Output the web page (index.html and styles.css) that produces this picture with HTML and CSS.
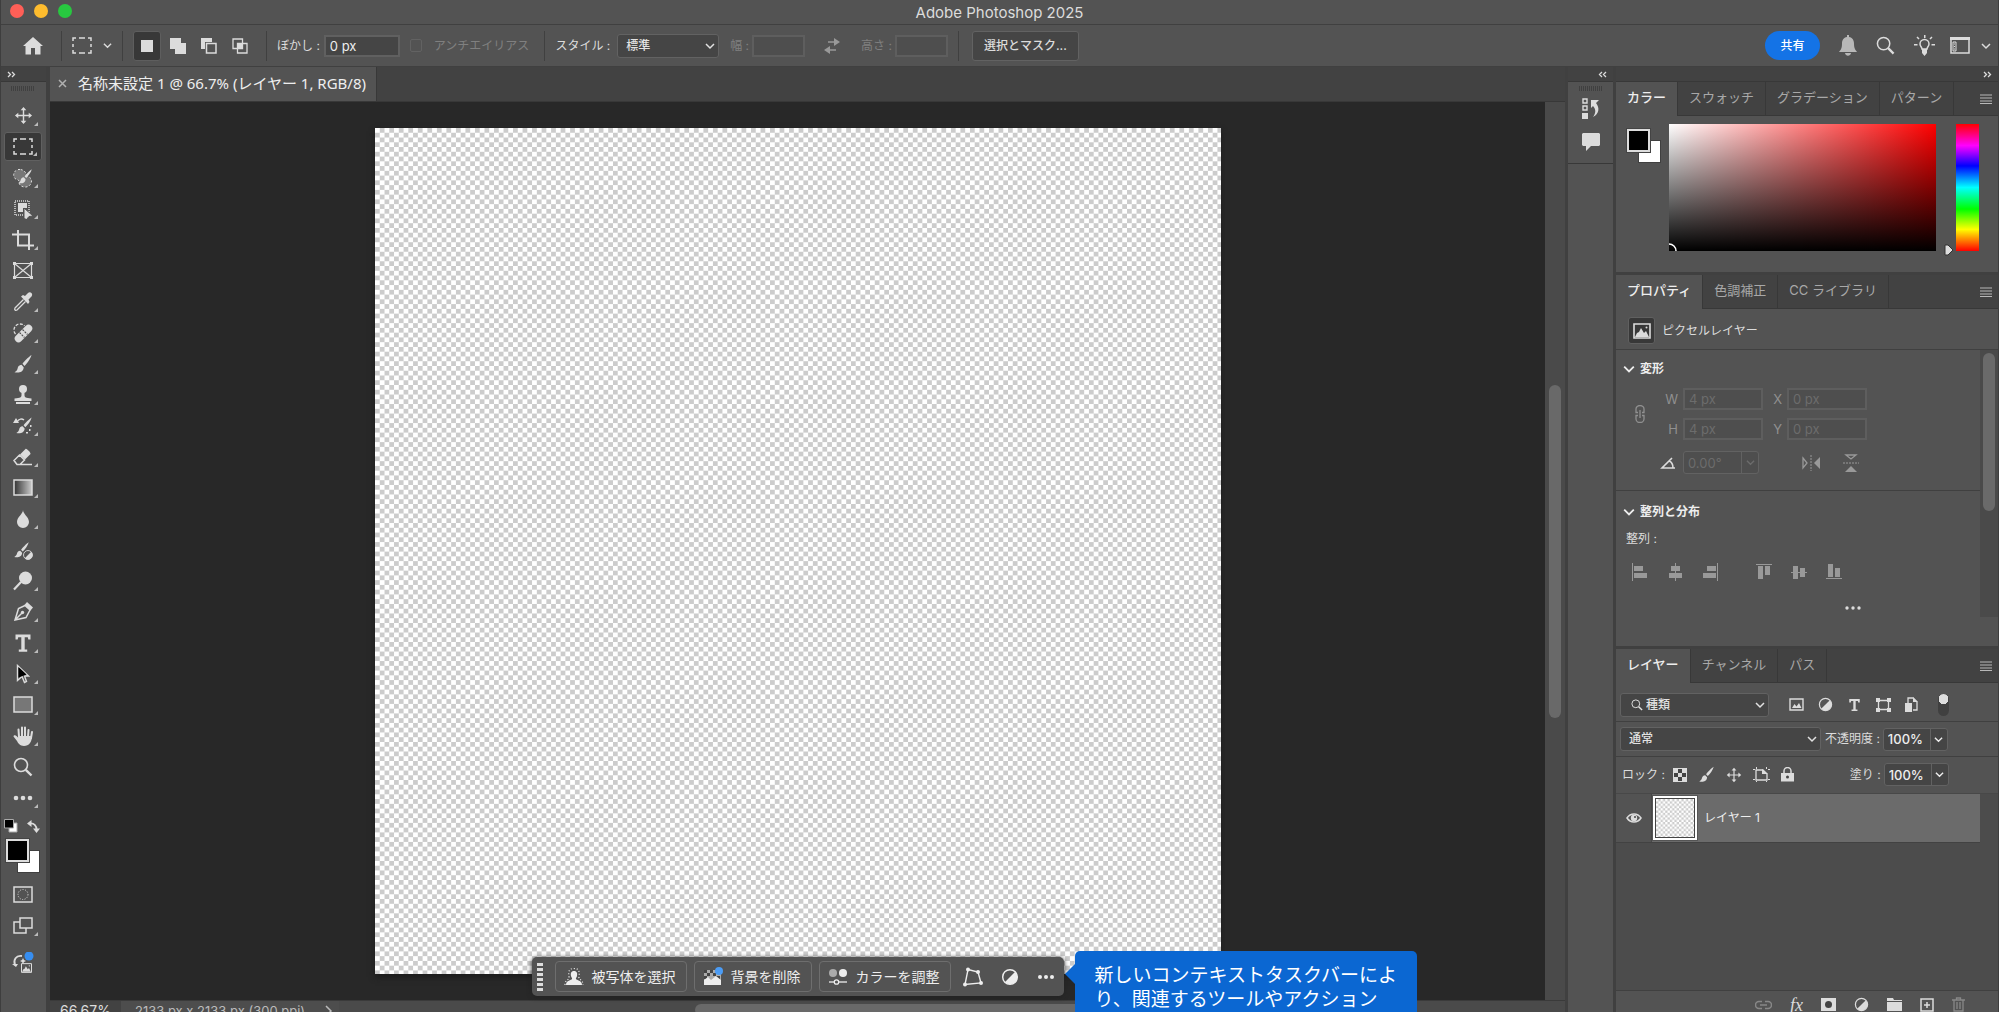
FILE: index.html
```html
<!DOCTYPE html>
<html lang="ja">
<head>
    <meta charset="UTF-8">
    <title>Adobe Photoshop 2025</title>
    <link rel="stylesheet" href="styles.css">
</head>
<body>
<!-- 共通アイコン -->
<svg class="defs" width="0" height="0">
    <symbol id="chevron" viewBox="0 0 10 10"><path d="M1 3l4 4 4-4" fill="none" stroke="currentColor" stroke-width="1.5"/></symbol>
    <symbol id="menu" viewBox="0 0 12 10"><path d="M0 1h12M0 4h12M0 7h12M0 9.500h12" stroke="currentColor" stroke-width="1.200"/></symbol>
    <symbol id="brush" viewBox="0 0 20 20"><path d="M18.500 1c-3 2-7.500 6.500-9 8.800l2 2.100C14 9.500 17.500 5 18.500 1zM8.500 10.800c-2.500.2-3.500 1.700-3.900 3.700-.4 1.700-1.400 2.800-3.100 3.700 3.500.9 8.900.6 9.200-4.900z"/></symbol>
    <symbol id="move" viewBox="0 0 20 20"><path d="M10 3v14M3 10h14" stroke="currentColor" stroke-width="1.500"/><path d="M10 1l3 3.500H7zM10 19l3-3.500H7zM1 10l3.500-3v6zM19 10l-3.500-3v6z"/></symbol>
    <symbol id="half" viewBox="0 0 16 16"><circle cx="8" cy="8" r="6.500" fill="none" stroke="currentColor" stroke-width="1.300"/><path d="M12.600 3.400a6.500 6.500 0 0 1-9.200 9.200z"/></symbol>
    <symbol id="search" viewBox="0 0 20 20"><circle cx="8" cy="8" r="6.500" fill="none" stroke="currentColor" stroke-width="1.600"/><path d="M12.800 12.800L18.500 18.500" stroke="currentColor" stroke-width="2.400"/></symbol>
    <symbol id="type" viewBox="0 0 20 20"><path d="M2.500 1.500h15v5h-2.200l-.5-2.300h-3.100v12.300h2.500v2.200H5.800v-2.200h2.500V4.200H5.200l-.5 2.300H2.500z"/></symbol>
    <symbol id="photo" viewBox="0 0 18 16"><path d="M1 1h16v14H1z" fill="none" stroke="currentColor" stroke-width="1.600"/><path d="M2 14l2-4 2-1 2-4 3 5 2-2 3 6z"/><circle cx="13.500" cy="4.500" r="1"/></symbol>
    <pattern id="tiles" width="8" height="8" patternUnits="userSpaceOnUse"><rect width="8" height="8" fill="#fff"/><path d="M4 0h4v4H4zM0 4h4v4H0z" fill="#ccc"/></pattern>
    <linearGradient id="fade"><stop offset="0" stop-color="#333"/><stop offset="1" stop-color="#ccc"/></linearGradient>
</svg>

<div class="app">
    <header class="titlebar">
        <span class="light red"></span>
        <span class="light yellow"></span>
        <span class="light green"></span>
        <h1>Adobe Photoshop 2025</h1>
    </header>

    <!-- オプションバー -->
    <div class="options">
        <button class="icon home" aria-label="ホーム"><svg width="20" height="18" viewBox="0 0 20 18"><path d="M10 0l10 9h-2.500v8.500H12V11H8v6.500H2.500V9H0z"/></svg></button>
        <span class="sep"></span>
        <button class="icon marquee" aria-label="長方形選択ツール">
            <svg width="20" height="17" viewBox="0 0 20 17"><path d="M1 4V1h3M7 1h6M16 1h3v3M19 7v3M19 13v3h-3M13 16H7M4 16H1v-3M1 10V7" fill="none" stroke="currentColor" stroke-width="1.500"/></svg>
            <svg width="9" height="9"><use href="#chevron"/></svg>
        </button>
        <span class="sep"></span>
        <div class="modes">
            <button class="mode active" aria-label="新規選択"><svg width="16" height="16"><path d="M2 2h12v12H2z"/></svg></button>
            <button class="mode" aria-label="選択範囲に追加"><svg width="18" height="18"><path d="M1 1h11v5h5v11H6v-5H1z"/></svg></button>
            <button class="mode" aria-label="選択範囲から一部削除"><svg width="18" height="18"><path d="M1 1h11v4H5v7H1z"/><path d="M6.500 6.500h9.500v9.500H6.500z" fill="none" stroke="currentColor" stroke-width="1.500"/></svg></button>
            <button class="mode" aria-label="選択範囲との共通範囲"><svg width="18" height="18"><path d="M2 2h9.500v9.500H2zM6.500 6.500h9.500v9.500H6.500z" fill="none" stroke="currentColor" stroke-width="1.300"/><path d="M6.500 6.500h5v5h-5z"/></svg></button>
        </div>
        <span class="sep"></span>
        <label for="feather">ぼかし :</label>
        <input class="field feather" id="feather" type="text" value="0 px">
        <input class="check" id="anti" type="checkbox" disabled>
        <label class="off anti" for="anti">アンチエイリアス</label>
        <span class="sep"></span>
        <label for="style">スタイル :</label>
        <span class="select style"><select id="style"><option>標準</option></select><svg width="10" height="10"><use href="#chevron"/></svg></span>
        <label class="off" for="width">幅 :</label>
        <input class="field size" id="width" type="text" disabled>
        <button class="icon swap" aria-label="高さと幅を入れ替え"><svg width="16" height="16" viewBox="0 0 16 16"><path d="M4 4h7M5 12h7" stroke="currentColor" stroke-width="1.500"/><path d="M10 0l6 4-6 4zM6 8l-6 4 6 4z"/></svg></button>
        <label class="off" for="height">高さ :</label>
        <input class="field size" id="height" type="text" disabled>
        <span class="sep"></span>
        <button class="mask">選択とマスク...</button>
        <div class="right">
            <button class="share">共有</button>
            <button class="icon bell" aria-label="通知"><svg width="18" height="21" viewBox="0 0 18 21"><path d="M8 0h2v2c3.500.6 5 3.300 5 6.500 0 4.500 1 6 3 8.500H0c2-2.500 3-4 3-8.500C3 5.300 4.500 2.600 8 2zM6 18h6c-.5 3.500-5.500 3.500-6 0z"/></svg></button>
            <button class="icon" aria-label="検索"><svg width="19" height="19"><use href="#search"/></svg></button>
            <button class="icon" aria-label="ヒント"><svg width="21" height="21" viewBox="0 0 21 21"><path d="M8 14c0-2-2-2.500-2-5a4.500 4.500 0 0 1 9 0c0 2.500-2 3-2 5z" fill="none" stroke="currentColor" stroke-width="1.500"/><path d="M8 14h5v4l-2.500 3L8 18zM10 0h1.500v3H10zM0 9h3.500v1.500H0zM17.500 9H21v1.500h-3.500z"/><path d="M3 2l2 2M18 2l-2 2" stroke="currentColor" stroke-width="1.500"/></svg></button>
            <button class="icon workspace" aria-label="ワークスペース"><svg width="20" height="17" viewBox="0 0 20 17"><path d="M1 2h18v14H1z" fill="none" stroke="currentColor" stroke-width="1.500"/><path d="M0 0h20v3H0z"/><path d="M3 5h3v9H3z" fill="none" stroke="currentColor"/><path d="M4 7h1M4 9.500h1M4 12h1" stroke="currentColor"/></svg><svg width="10" height="10"><use href="#chevron"/></svg></button>
        </div>
    </div>

    <div class="workspace-area">
        <!-- ツールバー -->
        <aside class="tools">
            <div class="strip"><svg width="9" height="7" viewBox="0 0 9 7"><path d="M1 1l2.500 2.500L1 6M5 1l2.500 2.500L5 6" fill="none" stroke="currentColor" stroke-width="1.300"/></svg></div>
            <div class="grip"></div>
            <button class="tool more" aria-label="移動"><svg width="19" height="19"><use href="#move"/></svg></button>
            <button class="tool more active" aria-label="長方形選択"><svg width="20" height="17" viewBox="0 0 20 17"><path d="M1 4V1h3M7 1h6M16 1h3v3M19 7v3M19 13v3h-3M13 16H7M4 16H1v-3M1 10V7" fill="none" stroke="currentColor" stroke-width="1.500"/></svg></button>
            <button class="tool more" aria-label="選択ブラシ"><svg width="20" height="20" viewBox="0 0 20 20"><path d="M7 1.500a5.500 5.500 0 0 0-5 9c2 1.500 4 .5 4 3.500s3 5.500 7 5 6-4 5.500-7-4-3-5-5.500-3-5-6.500-5z" fill="#777" stroke="currentColor" stroke-dasharray="2 2"/><use href="#brush" x="4" y="0" width="16" height="17"/></svg></button>
            <button class="tool more" aria-label="オブジェクト選択"><svg width="20" height="20" viewBox="0 0 20 20"><path d="M2 2h14v14H2z" fill="none" stroke="currentColor" stroke-dasharray="1 1" stroke-width="1.500"/><path d="M5 4h9v5h-4v4H5z"/><path d="M11 9l9 8-4 .5-2.500 3-2.500-1z" stroke="#535353"/></svg></button>
            <button class="tool more" aria-label="切り抜き"><svg width="22" height="20" viewBox="0 0 22 20"><path d="M0 4.500h17V20M6 0v15.500h16" fill="none" stroke="currentColor" stroke-width="2"/></svg></button>
            <button class="tool" aria-label="フレーム"><svg width="20" height="17" viewBox="0 0 20 17"><path d="M1.500 1.500h17v14h-17zM1.500 1.500l17 14M18.500 1.500l-17 14" fill="none" stroke="currentColor" stroke-width="1.200"/><path d="M0 0h3v3H0zM17 0h3v3h-3zM0 14h3v3H0zM17 14h3v3h-3z"/></svg></button>
            <button class="tool more" aria-label="スポイト"><svg width="20" height="20" viewBox="0 0 20 20"><path d="M10.500 7.500L2 16c-1 1.500.500 3 2 2l8.500-8.500" fill="none" stroke="currentColor" stroke-width="1.300"/><path d="M8 4.500l2-1.500 2 1 3-3c2.500-2 5.500 1 3.500 3.500l-3 3 1 2.500-1.500 2z"/></svg></button>
            <button class="tool more" aria-label="修復ブラシ"><svg width="20" height="20" viewBox="0 0 20 20"><path d="M2.500 11C-1 7 2 1 7 1c2 0 3.500.500 4.500 2" fill="none" stroke="currentColor" stroke-width="1.300" stroke-dasharray="3 1.500"/><path d="M5.500 15.500L15.500 5.500" stroke="currentColor" stroke-width="7.500" stroke-linecap="round"/><path d="M6.500 9.500l5 5M9.500 6.500l5 5" stroke="#535353" stroke-width="1.200" stroke-dasharray="2 1"/></svg></button>
            <button class="tool more" aria-label="ブラシ"><svg width="20" height="20"><use href="#brush"/></svg></button>
            <button class="tool more" aria-label="スタンプ"><svg width="18" height="20" viewBox="0 0 18 20"><circle cx="9" cy="4" r="4"/><path d="M7.500 6h3v4c0 2.500 1 3 7 3.500V16H.500v-2.500c6-.5 7-1 7-3.500zM2 17h14v2H2z"/></svg></button>
            <button class="tool more" aria-label="ヒストリーブラシ"><svg width="20" height="20" viewBox="0 0 20 20"><use href="#brush" x="2" y="0" width="18" height="19"/><path d="M4 6c2-3.500 5-3.500 7-2" fill="none" stroke="currentColor" stroke-width="1.500"/><path d="M0 7l3-5 3 5zM17 9h1.500v2H17zM16 13h1.500v2H16zM13 16h2v1.500h-2z"/></svg></button>
            <button class="tool more" aria-label="消しゴム"><svg width="20" height="18" viewBox="0 0 20 18"><path d="M1 12.500L6.500 7l5 5-4.500 4.500H4zM7 16.500h12" fill="none" stroke="currentColor" stroke-width="1.500"/><path d="M7 6.500L12.500 1c1-1 5.500 4 5 5L12 11.500z"/></svg></button>
            <button class="tool more" aria-label="グラデーション"><svg width="20" height="17"><path d="M1 1h18v15H1z" fill="url(#fade)" stroke="currentColor" stroke-width="1.500"/></svg></button>
            <button class="tool more" aria-label="ぼかし"><svg width="14" height="18" viewBox="0 0 14 18"><path d="M7 0c0 4 6 7 6 12a6 6 0 0 1-12 0C1 7 7 4 7 0z"/></svg></button>
            <button class="tool" aria-label="調整ブラシ"><svg width="20" height="20" viewBox="0 0 20 20"><use href="#brush" x="0" y="0" width="17" height="20"/><circle cx="15" cy="15" r="5.500" fill="#535353"/><use href="#half" x="9.500" y="9.500" width="11" height="11"/></svg></button>
            <button class="tool more" aria-label="覆い焼き"><svg width="20" height="20" viewBox="0 0 20 20"><circle cx="12.500" cy="7" r="6.500"/><path d="M8 11l-7 7.500" stroke="currentColor" stroke-width="2.200"/></svg></button>
            <button class="tool more" aria-label="ペン"><svg width="20" height="20" viewBox="0 0 20 20"><path d="M12 3.500L5.500 6.500 2 18l11-2.500 4-7.500zM2 18l7-7" fill="none" stroke="currentColor" stroke-width="1.500"/><circle cx="9.500" cy="10.500" r="1.700"/><path d="M14 0l6 5.500-2.500 3L11.500 3z"/></svg></button>
            <button class="tool more" aria-label="文字"><svg width="20" height="20"><use href="#type"/></svg></button>
            <button class="tool more" aria-label="パス選択"><svg width="14" height="20" viewBox="0 0 14 20"><path d="M1.500 1.500l11 10.500H8.500l2 5.500-2 1-2.500-6-4.500 4z" fill="none" stroke="currentColor" stroke-width="1.400"/><path d="M2.500 3l8 7.500-8 3z" fill="#000"/></svg></button>
            <button class="tool more" aria-label="長方形"><svg width="20" height="17"><path d="M1 1h18v15H1z" fill="#777" stroke="currentColor" stroke-width="1.500"/></svg></button>
            <button class="tool more" aria-label="手のひら"><svg width="20" height="20" viewBox="0 0 20 20"><path d="M6 11L5.500 3.500M9 10V1.500M12 10V1.500M15 11l.5-7M18 12l1-6" stroke="currentColor" stroke-width="2" stroke-linecap="round"/><path d="M5 10h14c0 6-3 10-8 10-4 0-6-3-7-5L.500 10.500c0-1.500 2-1.500 3-.5L5.500 12z"/></svg></button>
            <button class="tool" aria-label="ズーム"><svg width="20" height="20"><use href="#search"/></svg></button>
            <button class="tool more" aria-label="ツールバーを編集"><svg width="20" height="6"><circle cx="3" cy="3" r="2.300"/><circle cx="10" cy="3" r="2.300"/><circle cx="17" cy="3" r="2.300"/></svg></button>
            <div class="mini">
                <button class="icon" aria-label="初期設定の色"><svg width="14" height="14" viewBox="0 0 14 14"><path d="M5 4h8v9H5z" fill="#fff" stroke="#aaa"/><path d="M.500.500h9v8.500h-9z" fill="#000" stroke="#aaa"/></svg></button>
                <button class="icon" aria-label="色の入れ替え"><svg width="13" height="13" viewBox="0 0 13 13"><path d="M3 3.500c4-.5 6.500 2 6.500 6" fill="none" stroke="currentColor" stroke-width="1.800"/><path d="M0 3.500L4.500 0v7zM9.500 13L6 8.500h7z"/></svg></button>
            </div>
            <div class="colors"><span class="bg"></span><span class="fg"></span></div>
            <button class="tool" aria-label="クイックマスク"><svg width="20" height="17"><path d="M1 1h18v15H1z" fill="none" stroke="currentColor" stroke-width="1.500"/><circle cx="10" cy="8.500" r="5" fill="none" stroke="currentColor" stroke-dasharray="1 1.500"/></svg></button>
            <button class="tool more" aria-label="スクリーンモード"><svg width="20" height="17"><path d="M1 5h12v11H1z" fill="none" stroke="currentColor" stroke-width="1.500"/><path d="M7 1h12v10H7z" fill="#535353" stroke="currentColor" stroke-width="1.500"/></svg></button>
            <button class="tool gen" aria-label="画像を生成"><svg width="22" height="22" viewBox="0 0 22 22"><path d="M3 13C1 8 4 3 10 4" fill="none" stroke="currentColor" stroke-width="1.800"/><path d="M0 12h6l-2 3zM11 6l1 2 2 1-2 1-1 2-1-2-2-1 2-1z"/><circle cx="17" cy="4" r="4.500" fill="#378ef0"/><use href="#photo" x="8" y="11" width="13" height="10"/></svg></button>
        </aside>

        <!-- ドキュメント -->
        <main class="document">
            <div class="doc-tabs">
                <div class="doc-tab"><button class="close" aria-label="閉じる"><svg width="9" height="9"><path d="M1 1l7 7M8 1L1 8" stroke="currentColor" stroke-width="1.500"/></svg></button><span>名称未設定 1 @ 66.7% (レイヤー 1, RGB/8)</span></div>
            </div>
            <div class="stage">
                <div class="canvas">
                    <svg class="paper" viewBox="0 0 711 711"><rect width="711" height="711" fill="url(#tiles)"/></svg>
                    <div class="taskbar">
                        <span class="handle"></span>
                        <button class="task"><svg width="20" height="20" viewBox="0 0 20 20"><path d="M10 4c3 0 3.500 2.500 3 5-.3 1.500-1.500 2-1 3 .5 1.500 6 1 6 6H2c0-5 5.500-4.500 6-6 .5-1-.7-1.500-1-3-.5-2.500 0-5 3-5z"/><path d="M1 18c0-6 5-5 4-8C4 3 6 1.500 10 1.500S16 3 15 10c-1 3 4 2 4 8" fill="none" stroke="currentColor" stroke-dasharray="1 2" stroke-width="1.200"/></svg>被写体を選択</button>
                        <button class="task"><svg width="20" height="20" viewBox="0 0 20 20"><path d="M1 3h17v15H1z" fill="#aaa"/><path d="M1 3h3v3h3v3H4v3H1V9h3V6H1zM7 3h3v3h3v3h-3V6H7zM13 9h4v3h-4z" fill="#444"/><path d="M1 13l4-3 3 3 5-4 5 4v5H1z"/><circle cx="16" cy="4" r="4" fill="#4b9cf5"/></svg>背景を削除</button>
                        <button class="task"><svg width="20" height="20" viewBox="0 0 20 20"><circle cx="5" cy="6" r="4" fill="#aaa"/><circle cx="15" cy="6" r="4"/><path d="M1 15h18" stroke="currentColor" stroke-width="1.300"/><circle cx="8.500" cy="15" r="2.200" fill="#535353" stroke="currentColor" stroke-width="1.300"/></svg>カラーを調整</button>
                        <div class="task-icons">
                            <button class="icon" aria-label="変形"><svg width="20" height="20" viewBox="0 0 20 20"><path d="M5 2.500L15 5l3 11-16 1.500z" fill="none" stroke="currentColor" stroke-width="1.400"/><circle cx="5" cy="2.500" r="2"/><circle cx="15" cy="5" r="2"/><circle cx="18" cy="16" r="2"/><circle cx="2" cy="17.500" r="2"/></svg></button>
                            <button class="icon" aria-label="調整レイヤー"><svg width="18" height="18"><use href="#half"/></svg></button>
                            <button class="icon" aria-label="その他"><svg width="18" height="6"><circle cx="3" cy="3" r="2"/><circle cx="9" cy="3" r="2"/><circle cx="15" cy="3" r="2"/></svg></button>
                        </div>
                        <div class="tooltip">新しいコンテキストタスクバーにより、関連するツールやアクション</div>
                    </div>
                </div>
                <div class="vscroll"><span></span></div>
            </div>
            <footer class="status">
                <span class="zoom">66.67%</span>
                <button class="info">2133 px x 2133 px (300 ppi)<svg width="8" height="12"><path d="M1 1l5 5-5 5" fill="none" stroke="currentColor" stroke-width="1.500"/></svg></button>
                <div class="hscroll"><span></span></div>
            </footer>
        </main>

        <!-- 折りたたみパネル -->
        <aside class="dock">
            <div class="strip end"><svg width="9" height="7" viewBox="0 0 9 7"><path d="M4 1L1.500 3.500 4 6M8 1L5.500 3.500 8 6" fill="none" stroke="currentColor" stroke-width="1.300"/></svg></div>
            <div class="dock-group">
                <div class="grip"></div>
                <button class="icon" aria-label="ヒストリー"><svg width="18" height="21" viewBox="0 0 18 21"><path d="M1 1h4v4H1zM1 8h4v4H1z" fill="none" stroke="currentColor" stroke-width="1.400"/><path d="M0 15h6v6H0zM9 2h8l-3 3c4 5 3 11-3 14 3-4 3-8 0-11l-2 2z"/></svg></button>
                <button class="icon" aria-label="コメント"><svg width="18" height="18" viewBox="0 0 18 18"><path d="M1 0h16l1 1v11l-1 1H9l-5 5v-5H1l-1-1V1z"/></svg></button>
            </div>
        </aside>

        <aside class="panels">
            <div class="strip end"><svg width="9" height="7" viewBox="0 0 9 7"><path d="M1 1l2.500 2.500L1 6M5 1l2.500 2.500L5 6" fill="none" stroke="currentColor" stroke-width="1.300"/></svg></div>

            <!-- カラー -->
            <section class="panel color-panel">
                <nav class="tabs">
                    <button class="tab on">カラー</button><button class="tab">スウォッチ</button><button class="tab">グラデーション</button><button class="tab">パターン</button>
                    <button class="icon menu" aria-label="メニュー"><svg width="12" height="10"><use href="#menu"/></svg></button>
                </nav>
                <div class="picker">
                    <div class="colors"><span class="bg"></span><span class="fg"></span></div>
                    <div class="ramp"><svg width="8" height="8"><path d="M0 1a7 7 0 0 1 7 7" fill="none" stroke="#fff" stroke-width="1.500"/></svg></div>
                    <div class="hue"><svg width="10" height="12" viewBox="0 0 10 12"><path d="M1 1h3l5 5-5 5H1z" fill="#ddd" stroke="#333"/></svg></div>
                </div>
            </section>

            <!-- プロパティ -->
            <section class="panel props-panel">
                <nav class="tabs">
                    <button class="tab on">プロパティ</button><button class="tab">色調補正</button><button class="tab">CC ライブラリ</button>
                    <button class="icon menu" aria-label="メニュー"><svg width="12" height="10"><use href="#menu"/></svg></button>
                </nav>
                <div class="kind"><span class="kind-icon"><svg width="18" height="16"><use href="#photo"/></svg></span>ピクセルレイヤー</div>
                <div class="props">
                    <div class="props-body">
                        <div class="group">
                            <h2><svg width="12" height="12"><use href="#chevron"/></svg>変形</h2>
                            <div class="transform">
                                <svg class="chain" width="10" height="18" viewBox="0 0 10 18"><path d="M3 7.500H1V4a4 3.500 0 0 1 8 0v3.500H7M3 10.500H1V14a4 3.500 0 0 0 8 0v-3.500H7M5 5v8" fill="none" stroke="currentColor" stroke-width="1.300"/></svg>
                                <label for="w">W</label><input class="field dim" id="w" type="text" value="4 px" disabled>
                                <label for="x">X</label><input class="field dim" id="x" type="text" value="0 px" disabled>
                                <label for="h">H</label><input class="field dim" id="h" type="text" value="4 px" disabled>
                                <label for="y">Y</label><input class="field dim" id="y" type="text" value="0 px" disabled>
                            </div>
                            <div class="rotate">
                                <label for="angle" aria-label="角度"><svg width="16" height="12" viewBox="0 0 16 12"><path d="M15 11H2L12 1M9 4c3 1 4 4 4 7" fill="none" stroke="currentColor" stroke-width="1.600"/></svg></label>
                                <span class="combo faint"><input id="angle" type="text" value="0.00°" disabled><svg width="9" height="9"><use href="#chevron"/></svg></span>
                                <button class="icon fliph" aria-label="左右反転"><svg width="20" height="18" viewBox="0 0 20 18"><path d="M2 4l4 5-4 5z" fill="none" stroke="currentColor" stroke-width="1.300"/><path d="M19 3v12l-6-6z"/><path d="M10 1v16" stroke="currentColor" stroke-dasharray="2 1"/></svg></button>
                                <button class="icon" aria-label="上下反転"><svg width="18" height="20" viewBox="0 0 18 20"><path d="M4 2l5 4 5-4z" fill="none" stroke="currentColor" stroke-width="1.300"/><path d="M3 19h12l-6-6z"/><path d="M1 10h16" stroke="currentColor" stroke-dasharray="2 1"/></svg></button>
                            </div>
                        </div>
                        <div class="group align">
                            <h2><svg width="12" height="12"><use href="#chevron"/></svg>整列と分布</h2>
                            <p>整列 :</p>
                            <div class="align-row">
                                <button class="icon" aria-label="左端揃え"><svg width="18" height="18"><path d="M1 0h1v18H1zM3 3h9v5H3zM3 10h13v5H3z"/></svg></button>
                                <button class="icon" aria-label="水平方向中央揃え"><svg width="18" height="18"><path d="M9 0h1v18H9zM5 3h9v5H5zM3 10h13v5H3z"/></svg></button>
                                <button class="icon" aria-label="右端揃え"><svg width="18" height="18"><path d="M16 0h1v18h-1zM6 3h9v5H6zM2 10h13v5H2z"/></svg></button>
                                <button class="icon top" aria-label="上端揃え"><svg width="18" height="18"><path d="M1 1h16v1H1zM3 3h5v13H3zM10 3h5v9h-5z"/></svg></button>
                                <button class="icon" aria-label="垂直方向中央揃え"><svg width="18" height="18"><path d="M1 9h16v1H1zM3 3h5v13H3zM10 5h5v9h-5z"/></svg></button>
                                <button class="icon" aria-label="下端揃え"><svg width="18" height="18"><path d="M1 15h16v1H1zM3 1h5v13H3zM10 5h5v9h-5z"/></svg></button>
                            </div>
                            <button class="icon dots" aria-label="詳細オプション"><svg width="16" height="4"><circle cx="2" cy="2" r="1.700"/><circle cx="8" cy="2" r="1.700"/><circle cx="14" cy="2" r="1.700"/></svg></button>
                        </div>
                    </div>
                    <div class="pscroll"><span></span></div>
                </div>
            </section>

            <!-- レイヤー -->
            <section class="panel layers-panel">
                <nav class="tabs">
                    <button class="tab on">レイヤー</button><button class="tab">チャンネル</button><button class="tab">パス</button>
                    <button class="icon menu" aria-label="メニュー"><svg width="12" height="10"><use href="#menu"/></svg></button>
                </nav>
                <div class="row filter">
                    <span class="select kinds"><svg class="lens" width="12" height="12"><use href="#search"/></svg><select aria-label="フィルター"><option>種類</option></select><svg width="10" height="10"><use href="#chevron"/></svg></span>
                    <div class="filters">
                        <button class="icon" aria-label="ピクセル"><svg width="15" height="13" viewBox="0 0 15 13"><path d="M1 1h13v11H1z" fill="none" stroke="currentColor" stroke-width="1.400"/><path d="M3 10l2.500-4 2 2.500L10 5l2.500 5z"/></svg></button>
                        <button class="icon" aria-label="調整"><svg width="15" height="15"><use href="#half"/></svg></button>
                        <button class="icon" aria-label="テキスト"><svg width="15" height="14"><use href="#type"/></svg></button>
                        <button class="icon" aria-label="シェイプ"><svg width="15" height="14" viewBox="0 0 15 14"><path d="M2.500 2.500h10v9h-10z" fill="none" stroke="currentColor" stroke-width="1.300"/><path d="M0 0h4v4H0zM11 0h4v4h-4zM0 10h4v4H0zM11 10h4v4h-4z"/></svg></button>
                        <button class="icon" aria-label="スマートオブジェクト"><svg width="13" height="15" viewBox="0 0 13 15"><path d="M3 6V1h5l4 4v8H8" fill="none" stroke="currentColor" stroke-width="1.300"/><path d="M8 0v5h5zM0 6h7v9H0z"/></svg></button>
                    </div>
                    <button class="toggle" aria-label="フィルターのオン/オフ"></button>
                </div>
                <div class="row">
                    <span class="select blend"><select aria-label="描画モード"><option>通常</option></select><svg width="10" height="10"><use href="#chevron"/></svg></span>
                    <label for="opacity">不透明度 :</label>
                    <span class="combo"><input id="opacity" type="text" value="100%"><svg width="9" height="9"><use href="#chevron"/></svg></span>
                </div>
                <div class="row lock">
                    <span>ロック :</span>
                    <div class="locks">
                        <button class="icon" aria-label="透明ピクセル"><svg width="14" height="14" viewBox="0 0 14 14"><path d="M0 0h14v14H0z"/><path d="M5 1h4v4H5zM1 5h4v4H1zM9 5h4v4H9zM5 9h4v4H5z" fill="#444"/></svg></button>
                        <button class="icon" aria-label="画像ピクセル"><svg width="17" height="17"><use href="#brush"/></svg></button>
                        <button class="icon" aria-label="位置"><svg width="16" height="16"><use href="#move"/></svg></button>
                        <button class="icon" aria-label="アートボード"><svg width="17" height="15" viewBox="0 0 17 15"><path d="M3 3h7l4 4v6H3z" fill="none" stroke="currentColor" stroke-width="1.300"/><path d="M9 2v5h6zM0 2h2v1H0zM3 0h1v2H3zM15 2h2v1h-2zM0 12h2v1H0zM15 12h2v1h-2zM3 14h1v1H3zM13 14h1v1h-1zM13 0h1v2h-1z"/></svg></button>
                        <button class="icon" aria-label="すべて"><svg width="13" height="15" viewBox="0 0 13 15"><path d="M3 6V4a3.500 3.500 0 0 1 7 0v2" fill="none" stroke="currentColor" stroke-width="1.500"/><path d="M0 6h13v8.500H0z"/><circle cx="6.500" cy="10" r="1.500" fill="#444"/></svg></button>
                    </div>
                    <label for="fill">塗り :</label>
                    <span class="combo"><input id="fill" type="text" value="100%"><svg width="9" height="9"><use href="#chevron"/></svg></span>
                </div>
                <div class="layer-list">
                    <div class="layer">
                        <button class="icon eye" aria-label="表示"><svg width="16" height="10" viewBox="0 0 16 10"><path d="M1 5c3.500-5.300 10.500-5.300 14 0-3.500 5.300-10.500 5.300-14 0z" fill="none" stroke="currentColor" stroke-width="1.500"/><circle cx="8" cy="5" r="3.200"/><circle cx="9" cy="4" r="1" fill="#444"/></svg></button>
                        <div class="layer-name">
                            <span class="thumb"><svg width="38" height="38" viewBox="0 0 66 66"><rect width="66" height="66" fill="url(#tiles)"/></svg></span>
                            レイヤー 1
                        </div>
                    </div>
                </div>
                <footer class="layer-tools">
                    <button class="icon dim-icon" aria-label="リンク"><svg width="17" height="10" viewBox="0 0 17 10"><path d="M7 1.500H4a3.500 3.500 0 0 0 0 7h3M10 1.500h3a3.500 3.500 0 0 1 0 7h-3M5 5h7" fill="none" stroke="currentColor" stroke-width="1.500"/></svg></button>
                    <button class="icon fx">fx</button>
                    <button class="icon" aria-label="マスクを追加"><svg width="15" height="13"><path d="M0 0h15v13H0z"/><circle cx="7.500" cy="6.500" r="3.500" fill="#444"/></svg></button>
                    <button class="icon" aria-label="調整レイヤー"><svg width="15" height="15"><use href="#half"/></svg></button>
                    <button class="icon" aria-label="グループ"><svg width="15" height="13"><path d="M0 0h6l1 2h8v2H0zM0 4h15v9H0z"/><path d="M0 3.500h15" stroke="#535353"/></svg></button>
                    <button class="icon" aria-label="新規レイヤー"><svg width="14" height="14"><path d="M1 1h12v12H1zM7 4v6M4 7h6" fill="none" stroke="currentColor" stroke-width="1.500"/></svg></button>
                    <button class="icon dim-icon" aria-label="削除"><svg width="13" height="15"><path d="M0 3h13M4.500 3V1h4v2M2 3v11h9V3M5 5v7M8 5v7" fill="none" stroke="currentColor" stroke-width="1.300"/></svg></button>
                </footer>
            </section>
        </aside>
    </div>
</div>
</body>
</html>
```
FILE: styles.css
```css
* {
    box-sizing: border-box;
}

html {
    overflow: hidden;
}

body {
    margin: 0;
    background: #535353;
    color: #dcdcdc;
    font: 12px/16px "Inter", "Noto Sans CJK JP", sans-serif;
}

button, input, select {
    font: inherit;
    color: inherit;
    margin: 0;
    padding: 0;
    border: 0;
    background: none;
}

svg {
    display: block;
    flex: none;
    fill: currentColor;
}

.defs {
    position: absolute;
}

.app {
    display: flex;
    flex-direction: column;
    height: calc(100vh + 10px);
    border-left: 1px solid #3e3e3e;
    border-right: 1px solid #3e3e3e;
}

.icon {
    display: flex;
    align-items: center;
    justify-content: center;
    flex: none;
}

/* タイトルバー */
.titlebar {
    display: flex;
    align-items: center;
    height: 25px;
    gap: 10px;
    padding-left: 9px;
    padding-bottom: 2px;
    border-bottom: 1px solid #404040;
    position: relative;
}

.light {
    width: 14px;
    height: 14px;
    border-radius: 50%;
}

.red {
    background: #ff5f57;
}

.yellow {
    background: #febc2e;
}

.green {
    background: #28c840;
}

.titlebar h1 {
    position: absolute;
    left: 0;
    right: 0;
    margin: 0;
    text-align: center;
    font-size: 15px;
    font-weight: 400;
    line-height: 24px;
    top: 1px;
    pointer-events: none;
}

/* オプションバー */
.options {
    display: flex;
    align-items: center;
    height: 42px;
    padding: 0 7px 0 22px;
    border-bottom: 1px solid #404040;
}

.sep {
    width: 1px;
    height: 30px;
    background: #404040;
    margin: 0 10px;
}

.home {
    margin-right: 8px;
}

.marquee {
    gap: 11px;
}

.modes {
    display: flex;
    gap: 3px;
    margin-right: 2px;
}

.mode {
    width: 28px;
    height: 30px;
    display: flex;
    align-items: center;
    justify-content: center;
    border-radius: 3px;
}

.mode.active {
    background: #383838;
    border: 1px solid #5e5e5e;
}

.field {
    height: 22px;
    padding: 0 4px;
    border: 2px solid #606060;
    background: #454545;
    font-size: 13px;
}

.field:disabled {
    background: #4e4e4e;
    border-color: #5e5e5e;
    color: #6c6c6c;
}

.feather {
    width: 76px;
    margin: 0 10px 0 4px;
    color: #eee;
}

.check {
    appearance: none;
    width: 12px;
    height: 13px;
    border: 1px solid #626262;
    border-radius: 2px;
    margin-right: 12px;
}

.off {
    color: #808080;
}

.anti {
    margin-right: 5px;
}

.select {
    display: flex;
    align-items: center;
    position: relative;
    height: 24px;
    border: 1px solid #626262;
    border-radius: 3px;
    background: #454545;
    color: #e2e2e2;
    font-weight: 500;
}

.select select {
    appearance: none;
    flex: 1;
    height: 100%;
    padding-left: 8px;
}

.select > svg:last-child {
    position: absolute;
    right: 3px;
    pointer-events: none;
}

.style {
    width: 102px;
    margin: 0 11px 0 7px;
}

.size {
    width: 53px;
    margin-left: 3px;
}

.swap {
    margin: 0 21px 0 19px;
    color: #999;
}

.mask {
    height: 30px;
    padding: 0 11px;
    margin-left: 3px;
    border: 1px solid #626262;
    border-radius: 3px;
    background: #454545;
    font-weight: 500;
}

.right {
    display: flex;
    align-items: center;
    gap: 19px;
    margin-left: auto;
}

.share {
    width: 55px;
    height: 29px;
    border-radius: 15px;
    background: #1473e6;
    color: #fff;
    font-weight: 500;
}

.bell {
    color: #b8b8b8;
}

.workspace {
    gap: 11px;
    margin-left: -4px;
}

/* ワークスペース */
.workspace-area {
    display: flex;
    flex: 1;
    min-height: 0;
    background: #404040;
}

.strip {
    display: flex;
    align-items: center;
    flex: none;
    height: 15px;
    padding: 0 6px;
    background: #424242;
    border-bottom: 1px solid #383838;
}

.strip.end {
    justify-content: flex-end;
}

.grip {
    width: 24px;
    height: 5px;
    background: repeating-linear-gradient(to right, #404040 0 1px, #535353 1px 2px);
}

.tools {
    display: flex;
    flex-direction: column;
    width: 45px;
    flex: none;
    margin-right: 4px;
    background: #535353;
}

.tools .grip {
    margin: 4px 0 10px 10px;
}

.tool {
    display: flex;
    align-items: center;
    justify-content: center;
    flex: none;
    position: relative;
    width: 38px;
    height: 29px;
    margin: 0 0 2px 3px;
    border-radius: 3px;
}

.tool.active {
    background: #383838;
    border: 1px solid #606060;
}

.tool.more::after {
    content: "";
    position: absolute;
    right: 4px;
    bottom: 4px;
    border: 2px solid transparent;
    border-right-color: #bbb;
    border-bottom-color: #bbb;
}

.mini {
    display: flex;
    gap: 9px;
    margin: 5px 0 6px 3px;
}

.colors {
    display: grid;
    flex: none;
    width: 34px;
    height: 34px;
    margin-left: 5px;
}

.colors span {
    grid-area: 1 / 1;
    width: 23px;
    height: 23px;
    border: 1px solid #404040;
}

.colors .bg {
    place-self: end;
    background: #fff;
}

.colors .fg {
    background: #000;
    border: 2px solid #ddd;
    outline: 1px solid #444;
}

.tools .colors {
    margin-bottom: 7px;
}

.gen {
    margin-top: 6px;
}

/* ドキュメント */
.document {
    display: flex;
    flex-direction: column;
    flex: 1;
    min-width: 0;
}

.doc-tabs {
    display: flex;
    height: 35px;
    background: #424242;
    border-bottom: 1px solid #383838;
}

.doc-tab {
    display: flex;
    align-items: center;
    gap: 11px;
    padding: 0 10px 2px 8px;
    background: #535353;
    border-right: 1px solid #383838;
    color: #eee;
    font-family: "Noto Sans", "Noto Sans CJK JP", sans-serif;
    font-size: 15px;
}

.close {
    color: #b0b0b0;
}

.stage {
    display: flex;
    flex: 1;
    min-height: 0;
}

.canvas {
    display: flex;
    align-items: center;
    justify-content: center;
    flex: 1;
    position: relative;
    background: #282828;
}

.paper {
    width: 846px;
    height: 846px;
    box-shadow: 0 3px 6px #1c1c1c;
}

.vscroll {
    width: 20px;
    padding: 283px 4px 0;
    background: #4a4a4a;
}

.vscroll span {
    display: block;
    height: 333px;
    border-radius: 6px;
    background: #696969;
}

.status {
    display: flex;
    height: 22px;
    background: #424242;
    border-top: 1px solid #3a3a3a;
    font-size: 13px;
}

.zoom {
    width: 71px;
    padding-left: 10px;
    line-height: 19px;
    font-size: 14px;
}

.info {
    display: flex;
    align-items: center;
    gap: 20px;
    width: 218px;
    padding: 0 0 2px 14px;
    background: #4d4d4d;
    color: #bbb;
    white-space: nowrap;
    font-size: 13px;
}

.hscroll {
    flex: 1;
    padding-top: 3px;
    background: #4a4a4a;
}

.hscroll span {
    display: block;
    width: 41%;
    height: 12px;
    margin-left: 29%;
    border-radius: 6px;
    background: #696969;
}

/* コンテキストタスクバー */
.taskbar {
    display: flex;
    align-items: center;
    gap: 7px;
    position: absolute;
    left: 50%;
    bottom: 4px;
    z-index: 2;
    width: 532px;
    height: 39px;
    padding-left: 5px;
    transform: translateX(-50%);
    border-radius: 5px;
    background: #535353;
    box-shadow: 0 1px 5px #222;
    color: #eee;
}

.handle {
    width: 6px;
    height: 28px;
    margin-right: 5px;
    background: repeating-linear-gradient(#ddd 0 3px, #535353 3px 5px);
}

.task {
    display: flex;
    align-items: center;
    gap: 8px;
    height: 31px;
    padding: 0 10px 0 8px;
    border: 1px solid #6e6e6e;
    border-radius: 4px;
    font-size: 14px;
    line-height: 20px;
    white-space: nowrap;
}

.task-icons {
    display: flex;
    align-items: center;
    gap: 18px;
    margin-left: 5px;
}

.tooltip {
    position: absolute;
    left: calc(100% + 11px);
    top: -6px;
    width: 342px;
    padding: 13px 16px 18px 20px;
    border-radius: 5px;
    background: #0b67d2;
    color: #fff;
    font-size: 19px;
    line-height: 24px;
}

.tooltip::before {
    content: "";
    position: absolute;
    left: -10px;
    top: 13px;
    border: 10px solid transparent;
    border-right-color: #0b67d2;
    border-left: 0;
}

/* 折りたたみパネル */
.dock {
    display: flex;
    flex-direction: column;
    width: 45px;
    flex: none;
    margin: 0 3px;
    background: #535353;
}

.dock-group {
    display: flex;
    flex-direction: column;
    align-items: center;
    gap: 14px;
    height: 82px;
    padding-top: 4px;
    border-bottom: 1px solid #383838;
}

.dock-group .grip {
    margin-bottom: -7px;
}

.panels {
    display: flex;
    flex-direction: column;
    width: 382px;
    flex: none;
}

.panel {
    background: #535353;
    margin-bottom: 3px;
}

.tabs {
    display: flex;
    height: 34px;
    background: #424242;
    border-bottom: 1px solid #383838;
}

.tab {
    padding: 0 11px 4px;
    border-right: 1px solid #383838;
    color: #a8a8a8;
    font-size: 13px;
}

.tab.on {
    height: 34px;
    background: #535353;
    color: #eee;
    font-weight: 500;
}

.menu {
    margin: 0 6px 0 auto;
    color: #b8b8b8;
}

.color-panel {
    height: 190px;
}

.picker {
    display: flex;
    padding: 8px 19px 0 11px;
}

.picker .colors {
    margin: 5px 8px 0 0;
}

.ramp {
    display: flex;
    align-items: flex-end;
    flex: 1;
    height: 127px;
    background: linear-gradient(to top, #000, transparent), linear-gradient(to right, #fff, #f00);
}

.hue {
    position: relative;
    width: 23px;
    margin-left: 20px;
    background: linear-gradient(#f00, #f0f 17%, #00f 33%, #0ff 50%, #0f0 67%, #ff0 83%, #f00);
}

.hue svg {
    position: absolute;
    left: -12px;
    bottom: -5px;
}

/* プロパティ */
.props-panel {
    display: flex;
    flex-direction: column;
    height: 371px;
}

.kind {
    display: flex;
    align-items: center;
    gap: 7px;
    height: 41px;
    padding: 3px 0 0 12px;
    border-bottom: 1px solid #404040;
}

.kind-icon {
    display: flex;
    align-items: center;
    justify-content: center;
    width: 27px;
    height: 27px;
    background: #383838;
    border: 1px solid #606060;
    border-radius: 3px;
}

.props {
    display: flex;
    height: 267px;
}

.props-body {
    flex: 1;
}

.pscroll {
    width: 18px;
    padding: 3px 3px 0;
    background: #4a4a4a;
}

.pscroll span {
    display: block;
    height: 158px;
    border-radius: 6px;
    background: #6a6a6a;
}

.group {
    height: 141px;
    padding: 11px 7px 0;
    border-bottom: 1px solid #404040;
}

.group.align {
    padding-top: 13px;
    border: 0;
}

.group h2 {
    display: flex;
    align-items: center;
    gap: 5px;
    margin: 0 0 11px;
    color: #eee;
    font-size: 12px;
    line-height: 16px;
}

.transform {
    display: grid;
    grid-template-columns: 34px 18px 80px 24px 80px;
    gap: 8px 0;
    align-items: center;
    justify-content: start;
    padding-left: 8px;
    color: #909090;
    font-size: 13px;
}

.transform label {
    padding-right: 5px;
    text-align: right;
}

.chain {
    grid-row: 1 / 3;
    justify-self: center;
    margin-right: 16px;
}

.dim {
    width: 100%;
}

.rotate {
    display: flex;
    align-items: center;
    margin-top: 11px;
    padding-left: 37px;
}

.rotate .icon, .align-row {
    color: #999;
}

.combo {
    display: flex;
    align-items: center;
    width: 65px;
    height: 23px;
    border: 1px solid #626262;
    border-radius: 3px;
    background: #454545;
    font-size: 13px;
    font-weight: 500;
    color: #eee;
}

.combo input {
    width: 47px;
    height: 100%;
    padding-left: 4px;
    border-right: 1px solid #626262;
}

.combo svg {
    margin: 0 auto;
}

.combo.faint {
    width: 76px;
    margin: 0 42px 0 7px;
    background: #4e4e4e;
    color: #6c6c6c;
    font-weight: 400;
}

.faint input {
    width: 58px;
}

.fliph {
    margin-right: 21px;
}

.align h2 {
    margin-bottom: 7px;
}

.align p {
    margin: 11px 0 16px 3px;
}

.align-row {
    display: flex;
    gap: 17px;
    padding-left: 8px;
}

.top {
    margin-left: 19px;
}

.dots {
    margin: 25px 0 0 222px;
}

/* レイヤー */
.layers-panel {
    display: flex;
    flex-direction: column;
    flex: 1;
    min-height: 0;
    margin: 0;
}

.row {
    display: flex;
    align-items: center;
    height: 35px;
    padding-left: 4px;
    border-bottom: 1px solid #404040;
}

.row.filter {
    height: 39px;
    padding-top: 5px;
}

.kinds {
    width: 149px;
    padding-left: 10px;
}

.kinds select {
    padding-left: 3px;
}

.filters {
    display: flex;
    align-items: center;
    gap: 14px;
    margin: 0 20px 0 20px;
}

.toggle {
    width: 11px;
    height: 22px;
    border-radius: 6px;
    background: radial-gradient(circle at 50% 5px, #ddd 5px, #404040 5px);
}

.blend {
    width: 201px;
    margin-right: 4px;
}

.row .combo {
    margin-left: 3px;
}

.row.lock {
    height: 36px;
    padding: 0 0 1px 6px;
    border: 0;
}

.locks {
    display: flex;
    align-items: center;
    gap: 11px;
    margin: 0 56px 0 8px;
}

.layer-list {
    flex: 1;
    padding-right: 18px;
    background: #4c4c4c;
    border-top: 1px solid #484848;
}

.layer {
    display: flex;
    height: 49px;
    background: #535353;
    border-bottom: 1px solid #424242;
}

.eye {
    width: 36px;
    border-right: 1px solid #484848;
}

.layer-name {
    display: flex;
    align-items: center;
    gap: 7px;
    flex: 1;
    padding-left: 1px;
    background: #6b6b6b;
    color: #eee;
}

.thumb {
    padding: 1px;
    border: 2px solid #fff;
    outline: 1px solid #555;
    background: #444;
}

.layer-tools {
    display: flex;
    align-items: center;
    gap: 18px;
    height: 32px;
    padding: 0 33px 4px 0;
    border-top: 1px solid #404040;
    justify-content: flex-end;
}

.dim-icon {
    color: #888;
}

.fx {
    font: italic 18px/20px "Liberation Serif", serif;
}
```
